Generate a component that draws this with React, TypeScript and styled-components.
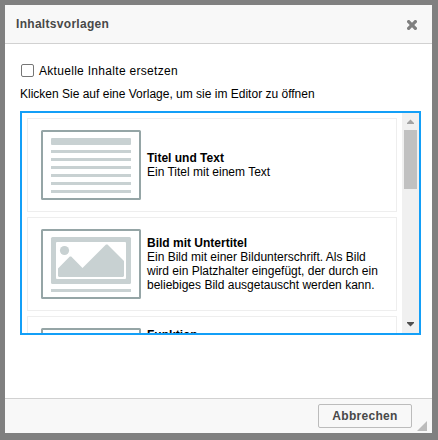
import React from 'react';
import styled, { createGlobalStyle } from 'styled-components';

const GlobalStyle = createGlobalStyle`
  * { box-sizing: border-box; }
  html, body { margin: 0; height: 100%; overflow: hidden; background: #808080; }
  body { font-family: "Liberation Sans", Arial, sans-serif; font-size: 12px; color: #000; }
`;

const Backdrop = styled.div`
  width: 438px;
  height: 440px;
  padding: 5px 6px 7px 5px;
  background: #808080;
`;

const Dialog = styled.section`
  height: 428px;
  display: flex;
  flex-direction: column;
  background: #fff;
`;

const Header = styled.header`
  height: 39px;
  flex: none;
  display: flex;
  justify-content: space-between;
  align-items: center;
  padding: 0 15px 0 11px;
  background: #f8f8f8;
  border-bottom: 1px solid #d1d1d1;
`;

const Title = styled.h1`
  margin: 0;
  font-size: 12px;
  line-height: 16px;
  letter-spacing: 0.3px;
  color: #484848;
`;

const CloseButton = styled.button`
  display: flex;
  padding: 0;
  margin-top: 2px;
  border: 0;
  background: none;
`;

const Body = styled.main`
  flex: 1;
  min-height: 0;
  padding: 20px 11px 0 15px;
`;

const CheckLabel = styled.label`
  display: flex;
  align-items: center;
  height: 14px;
  gap: 5px;
  padding-left: 1px;
  letter-spacing: 0.3px;
`;

const Checkbox = styled.input`
  appearance: none;
  align-self: flex-start;
  width: 13px;
  height: 13px;
  margin: 0;
  border: 1px solid #767676;
  border-radius: 2px;
  background: #fff;
`;

const Hint = styled.p`
  margin: 8px 0 9px;
  line-height: 16px;
`;

const ListBox = styled.div`
  width: 401px;
  height: 224px;
  display: flex;
  border: 2px solid #139ff7;
  overflow: hidden;
`;

const Cards = styled.div`
  flex: 1;
  min-width: 0;
  display: flex;
  flex-direction: column;
  gap: 5px;
  padding: 5px;
`;

const Card = styled.article`
  flex: none;
  height: 94px;
  display: flex;
  align-items: center;
  gap: 6px;
  padding: 0 13px;
  border: 1px solid #eee;

  & > svg { flex: none; }
`;

const CardText = styled.div<{ $lines: number }>`
  width: 237px;
  height: ${({ $lines }) => $lines * 14}px;
  line-height: 14px;
`;

const Scrollbar = styled.div`
  width: 17px;
  flex: none;
  display: flex;
  flex-direction: column;
  align-items: center;
  background: #f0f0f0;
`;

const Arrow = styled.svg`
  width: 17px;
  height: 17px;
  flex: none;
`;

const Thumb = styled.div`
  width: 13px;
  height: 59px;
  margin-bottom: auto;
  background: #c1c1c1;
`;

const Footer = styled.footer`
  height: 35px;
  flex: none;
  display: flex;
  justify-content: flex-end;
  align-items: flex-end;
  padding: 0 5px 2px 0;
  gap: 5px;
  background: #f8f8f8;
  border-top: 1px solid #d1d1d1;
`;

const Button = styled.button`
  width: 94px;
  height: 24px;
  margin-bottom: 3px;
  padding: 0;
  border: 1px solid #bcbcbc;
  border-radius: 2px;
  background: #f8f8f8;
  color: #484848;
  font: bold 12px/22px "Liberation Sans", Arial, sans-serif;
  letter-spacing: 0.3px;
`;

const Frame = ({ children }: { children?: React.ReactNode }) => (
  <svg width="100" height="70" viewBox="0 0 100 70">
    <rect x="1" y="1" width="98" height="68" rx="0.5" fill="#fff" stroke="#95a5a6" strokeWidth="2" />
    {children}
  </svg>
);

const TextPreview = () => (
  <Frame>
    <rect x="10" y="8" width="80" height="7" rx="1" fill="#c8d1d2" />
    {[20, 28, 36, 44, 52, 60].map((y) => (
      <rect key={y} x="10" y={y} width="80" height="3" fill="#c8d1d2" />
    ))}
  </Frame>
);

const ImagePreview = () => (
  <Frame>
    <rect x="10" y="8" width="80" height="47" rx="1.5" fill="#c8d1d2" />
    <rect x="15" y="13" width="70" height="37" rx="1" fill="#fff" />
    <g fill="#c8d1d2">
      <circle cx="23.5" cy="21.5" r="4.6" />
      <path d="M17 39.5 28.8 27.5H30.2L41.5 39 65 15.5H66.5L83 32V47L82 48H18L17 47Z" />
      <rect x="10" y="60" width="80" height="3" />
    </g>
  </Frame>
);

const templates = [
  { title: 'Titel und Text', text: 'Ein Titel mit einem Text', lines: 2, Preview: TextPreview },
  {
    title: 'Bild mit Untertitel',
    text: 'Ein Bild mit einer Bildunterschrift. Als Bild wird ein Platzhalter eingefügt, der durch ein beliebiges Bild ausgetauscht werden kann.',
    lines: 4,
    Preview: ImagePreview,
  },
  { title: 'Funktion', text: '', lines: 5, Preview: Frame },
];

export default function App() {
  return (
    <Backdrop>
      <GlobalStyle />
      <Dialog>
        <Header>
          <Title>Inhaltsvorlagen</Title>
          <CloseButton aria-label="Schließen">
            <svg width="10" height="10" viewBox="0 0 10 10">
              <path
                d="M0 1 1 0H2.3L5 2.7 7.7 0H9L10 1V2.3L7.3 5 10 7.7V9L9 10H7.7L5 7.3 2.3 10H1L0 9V7.7L2.7 5 0 2.3Z"
                fill="#808080"
              />
            </svg>
          </CloseButton>
        </Header>
        <Body>
          <CheckLabel>
            <Checkbox type="checkbox" />
            Aktuelle Inhalte ersetzen
          </CheckLabel>
          <Hint>Klicken Sie auf eine Vorlage, um sie im Editor zu öffnen</Hint>
          <ListBox>
            <Cards>
              {templates.map(({ title, text, lines, Preview }) => (
                <Card key={title}>
                  <Preview />
                  <CardText $lines={lines}>
                    <b>{title}</b>
                    <br />
                    {text}
                  </CardText>
                </Card>
              ))}
            </Cards>
            <Scrollbar>
              <Arrow viewBox="0 0 17 17">
                <path d="M5 11V10L8.5 6.5 12 10V11Z" fill="#a3a3a3" />
              </Arrow>
              <Thumb />
              <Arrow viewBox="0 0 17 17">
                <path d="M5 6V7L8.5 10.5 12 7V6Z" fill="#505050" />
              </Arrow>
            </Scrollbar>
          </ListBox>
        </Body>
        <Footer>
          <Button>Abbrechen</Button>
          <svg width="10" height="10" viewBox="0 0 10 10">
            <path d="M10 0V10H0Z" fill="#bcbcbc" />
          </svg>
        </Footer>
      </Dialog>
    </Backdrop>
  );
}
